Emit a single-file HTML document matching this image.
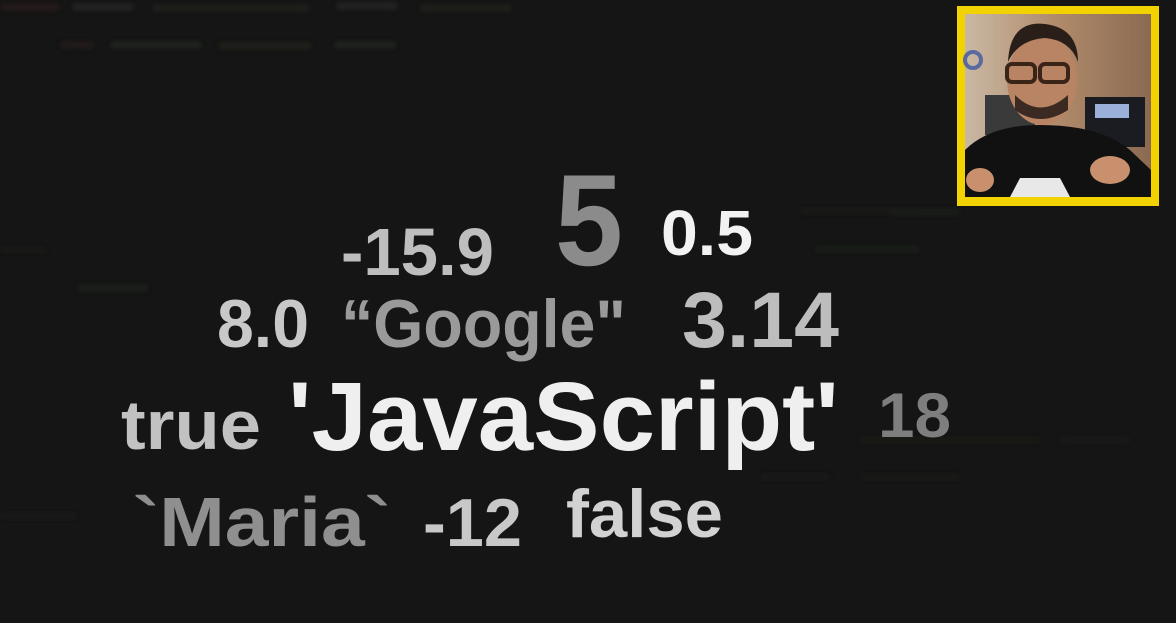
<!DOCTYPE html>
<html><head><meta charset="utf-8"><style>
html,body{margin:0;padding:0;background:#151615;width:1176px;height:623px;overflow:hidden}
svg{display:block}
text{font-family:"Liberation Sans",sans-serif;font-weight:bold}
</style></head><body>
<svg width="1176" height="623" viewBox="0 0 1176 623" xmlns="http://www.w3.org/2000/svg">
<defs>
<filter id="b"><feGaussianBlur stdDeviation="2"/></filter>
<linearGradient id="wall" x1="0" y1="0" x2="1" y2="0"><stop offset="0" stop-color="#c9b8a4"/><stop offset="0.5" stop-color="#b08a6a"/><stop offset="1" stop-color="#8a6a52"/></linearGradient>
</defs>
<rect width="1176" height="623" fill="#141514"/>
<g filter="url(#b)" opacity="0.7">
<rect x="0" y="3" width="60" height="8" rx="4" fill="#2a1a1a"/>
<rect x="72" y="3" width="62" height="8" rx="4" fill="#262726"/>
<rect x="152" y="4" width="158" height="8" rx="4" fill="#22201a"/>
<rect x="336" y="2" width="62" height="8" rx="4" fill="#262726"/>
<rect x="420" y="4" width="92" height="8" rx="4" fill="#22201a"/>
<rect x="60" y="41" width="34" height="8" rx="4" fill="#261a1a"/>
<rect x="110" y="41" width="92" height="8" rx="4" fill="#242524"/>
<rect x="218" y="42" width="94" height="8" rx="4" fill="#21201a"/>
<rect x="334" y="41" width="62" height="8" rx="4" fill="#242524"/>
<rect x="0" y="247" width="46" height="6" rx="3" fill="#1f1e18"/>
<rect x="78" y="284" width="70" height="8" rx="4" fill="#1f201f"/>
<rect x="800" y="208" width="120" height="6" rx="3" fill="#1f1e18"/>
<rect x="890" y="209" width="70" height="6" rx="3" fill="#1f201f"/>
<rect x="815" y="246" width="105" height="6" rx="3" fill="#1f201f"/>
<rect x="760" y="474" width="70" height="6" rx="3" fill="#1d1e1d"/>
<rect x="860" y="474" width="100" height="6" rx="3" fill="#1e1d18"/>
<rect x="1060" y="437" width="70" height="6" rx="3" fill="#1e1f1e"/>
<rect x="860" y="437" width="180" height="6" rx="3" fill="#1e1d18"/>
<rect x="0" y="513" width="76" height="6" rx="3" fill="#1d1e1d"/>
</g>
<g lengthAdjust="spacingAndGlyphs">
<text x="555" y="265" font-size="130" fill="#8b8b8b" textLength="68" lengthAdjust="spacingAndGlyphs">5</text>
<text x="341" y="275" font-size="67" fill="#bebebe" textLength="153" lengthAdjust="spacingAndGlyphs">-15.9</text>
<text x="661" y="255" font-size="64" fill="#f2f2f2" textLength="92" lengthAdjust="spacingAndGlyphs">0.5</text>
<text x="217" y="347" font-size="68" fill="#c8c8c8" textLength="92" lengthAdjust="spacingAndGlyphs">8.0</text>
<text x="341" y="347" font-size="68" fill="#9a9a9a" textLength="285" lengthAdjust="spacingAndGlyphs">“Google"</text>
<text x="682" y="347" font-size="79" fill="#bdbdbd" textLength="157" lengthAdjust="spacingAndGlyphs">3.14</text>
<text x="121" y="449" font-size="70" fill="#c2c2c2" textLength="140" lengthAdjust="spacingAndGlyphs">true</text>
<text x="288" y="450" font-size="97" fill="#efefef" textLength="551" lengthAdjust="spacingAndGlyphs">'JavaScript'</text>
<text x="878" y="437" font-size="63" fill="#7e7e7e" textLength="73" lengthAdjust="spacingAndGlyphs">18</text>
<text x="133" y="546" font-size="70" fill="#8f8f8f" textLength="258" lengthAdjust="spacingAndGlyphs">`Maria`</text>
<text x="423" y="546" font-size="68" fill="#c8c8c8" textLength="99" lengthAdjust="spacingAndGlyphs">-12</text>
<text x="566" y="537" font-size="68" fill="#d2d2d2" textLength="157" lengthAdjust="spacingAndGlyphs">false</text>
</g>
<!-- webcam -->
<rect x="957" y="6" width="202" height="200" fill="#f2d200"/>
<rect x="965" y="14" width="186" height="183" fill="url(#wall)"/>
<circle cx="973" cy="60" r="8" fill="none" stroke="#5a6aa0" stroke-width="4"/>
<rect x="1085" y="97" width="60" height="50" fill="#1a1c22"/>
<rect x="1095" y="104" width="34" height="14" fill="#9ab0d8"/>
<rect x="985" y="95" width="50" height="40" fill="#3a3a3a"/>
<ellipse cx="1042" cy="80" rx="35" ry="45" fill="#b88464"/>
<path d="M1008 62 Q1010 20 1045 24 Q1078 28 1078 62 Q1070 40 1045 38 Q1018 40 1008 62Z" fill="#2a1e18"/>
<path d="M1015 95 Q1040 120 1068 95 L1068 110 Q1040 128 1015 110Z" fill="#3a2a22"/>
<rect x="1007" y="64" width="28" height="18" rx="5" fill="none" stroke="#3a2418" stroke-width="4"/>
<rect x="1040" y="64" width="28" height="18" rx="5" fill="none" stroke="#3a2418" stroke-width="4"/>
<path d="M965 197 L965 150 Q990 125 1040 125 Q1100 125 1130 150 L1151 170 L1151 197Z" fill="#111"/>
<path d="M1010 197 L1020 178 L1060 178 L1070 197Z" fill="#e8e8e8"/>
<ellipse cx="980" cy="180" rx="14" ry="12" fill="#c8906c"/>
<ellipse cx="1110" cy="170" rx="20" ry="14" fill="#c8906c"/>
</svg>
</body></html>
